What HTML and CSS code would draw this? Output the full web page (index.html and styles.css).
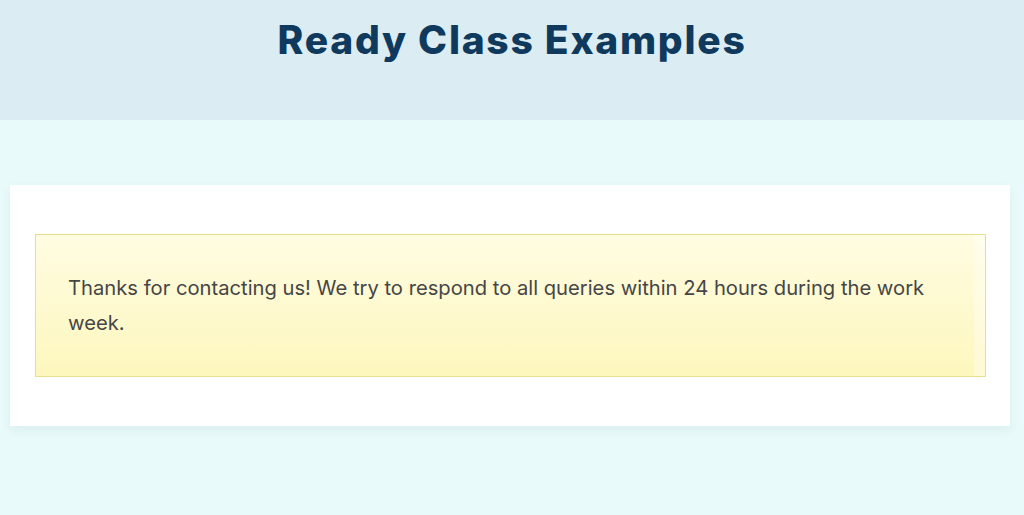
FILE: index.html
```html
<!DOCTYPE html>
<html lang="en">
<head>
<meta charset="utf-8">
<title>Ready Class Examples</title>
<link rel="stylesheet" href="styles.css">
</head>
<body>
<header class="site-header">
  <h1 class="site-title">Ready Class Examples</h1>
</header>
<main class="content">
  <section class="card">
    <div class="notice">
      <p class="notice-text">Thanks for contacting us! We try to respond to all queries within 24 hours during the work week.</p>
    </div>
  </section>
</main>
</body>
</html>
```
FILE: styles.css
```css
html, body {
  margin: 0;
  padding: 0;
}
body {
  background: #e8fafa;
  font-family: Inter, "Noto Sans", "Liberation Sans", sans-serif;
  min-height: 515px;
}
.site-header {
  background: #dbedf2;
  height: 120px;
  display: flex;
  justify-content: center;
  padding-top: 14px;
  box-sizing: border-box;
}
.site-title {
  margin: 0;
  font-family: Inter, "Liberation Sans", sans-serif;
  font-weight: 800;
  font-size: 39px;
  line-height: 52px;
  color: #0f3a5e;
  letter-spacing: 1.75px;
}
.content {
  padding: 65px 14px 0 10px;
}
.card {
  background: #ffffff;
  padding: 49px 24px 49px 25px;
  box-shadow: 0 4px 10px rgba(0, 60, 80, 0.06);
}
.notice {
  border: 1px solid #e6df8c;
  background: linear-gradient(to bottom, #fffce2 0%, #fdf7bd 100%);
  box-shadow: inset -11px 0 0 rgba(255, 255, 255, 0.35);
  padding: 35px 40px 36px 32px;
}
.notice-text {
  margin: 0;
  font-size: 20.2px;
  line-height: 35px;
  color: #464646;
}
```
